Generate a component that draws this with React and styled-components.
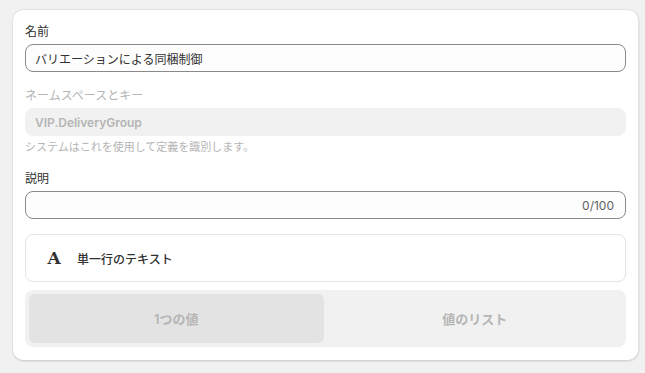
import React from "react";
import styled, { createGlobalStyle } from "styled-components";

const GlobalStyle = createGlobalStyle`
  html, body {
    margin: 0;
    padding: 0;
    background: #f1f1f1;
  }
  body {
    font-family: "Inter", "Noto Sans CJK JP", sans-serif;
    color: #303030;
  }
`;

const Page = styled.div`
  padding: 9px 6px 12px 12px;
`;

const Card = styled.div`
  background: #ffffff;
  border-radius: 12px;
  padding: 15px 13px 14px 13px;
  display: flex;
  flex-direction: column;
  gap: 16px;
  box-shadow: 0 1px 1px rgba(0, 0, 0, 0.08), 1px 0 1px rgba(0, 0, 0, 0.04),
    inset 0 -1px 0 #d4d4d4, inset -1px 0 0 #e3e3e3, inset 1px 0 0 #e3e3e3,
    inset 0 1px 0 #e3e3e3;
`;

const Field = styled.div`
  display: flex;
  flex-direction: column;
  gap: 4px;
`;

const Label = styled.label`
  font-size: 12px;
  line-height: 16px;
  color: ${(p) => (p.$disabled ? "#b5b5b5" : "#303030")};
`;

const InputBox = styled.div`
  height: 28px;
  box-sizing: border-box;
  display: flex;
  align-items: center;
  padding: 0 11px 0 9px;
  border-radius: 8px;
  font-size: 12px;
  background: ${(p) => (p.$disabled ? "#f1f1f1" : "#fdfdfd")};
  border: 1px solid ${(p) => (p.$disabled ? "#f1f1f1" : "#8a8a8a")};
  color: ${(p) => (p.$disabled ? "#b5b5b5" : "#303030")};
  font-weight: ${(p) => (p.$disabled ? 600 : 400)};
`;

const Value = styled.span`
  flex: 1;
`;

const Counter = styled.span`
  font-size: 12px;
  color: #616161;
`;

const Help = styled.div`
  font-size: 11px;
  line-height: 15px;
  color: #b5b5b5;
`;

const TypeGroup = styled.div`
  display: flex;
  flex-direction: column;
  gap: 8px;
  margin-top: -1px;
`;

const TypeRow = styled.div`
  height: 48px;
  box-sizing: border-box;
  border: 1px solid #e3e3e3;
  border-radius: 8px;
  display: flex;
  align-items: center;
  padding: 0 18px;
  gap: 13px;
`;

const TypeIcon = styled.span`
  width: 20px;
  text-align: center;
  font-family: "DejaVu Serif", "Liberation Serif", serif;
  font-weight: 700;
  font-size: 17px;
  color: #303030;
`;

const TypeName = styled.span`
  font-size: 12px;
  font-weight: 550;
`;

const Segmented = styled.div`
  height: 57px;
  box-sizing: border-box;
  background: #f1f1f1;
  border-radius: 8px;
  padding: 4px;
  display: grid;
  grid-template-columns: 1fr 1fr;
  gap: 4px;
`;

const SegButton = styled.div`
  border-radius: 6px;
  display: flex;
  align-items: center;
  justify-content: center;
  font-size: 13px;
  font-weight: 600;
  color: #b5b5b5;
  background: ${(p) => (p.$active ? "#e3e3e3" : "transparent")};
`;

export default function App() {
  return (
    <Page>
      <GlobalStyle />
      <Card>
        <Field>
          <Label>名前</Label>
          <InputBox>
            <Value>バリエーションによる同梱制御</Value>
          </InputBox>
        </Field>
        <Field>
          <Label $disabled>ネームスペースとキー</Label>
          <InputBox $disabled>
            <Value>VIP.DeliveryGroup</Value>
          </InputBox>
          <Help>システムはこれを使用して定義を識別します。</Help>
        </Field>
        <Field>
          <Label>説明</Label>
          <InputBox>
            <Value />
            <Counter>0/100</Counter>
          </InputBox>
        </Field>
        <TypeGroup>
          <TypeRow>
            <TypeIcon>A</TypeIcon>
            <TypeName>単一行のテキスト</TypeName>
          </TypeRow>
          <Segmented>
            <SegButton $active>1つの値</SegButton>
            <SegButton>値のリスト</SegButton>
          </Segmented>
        </TypeGroup>
      </Card>
    </Page>
  );
}
